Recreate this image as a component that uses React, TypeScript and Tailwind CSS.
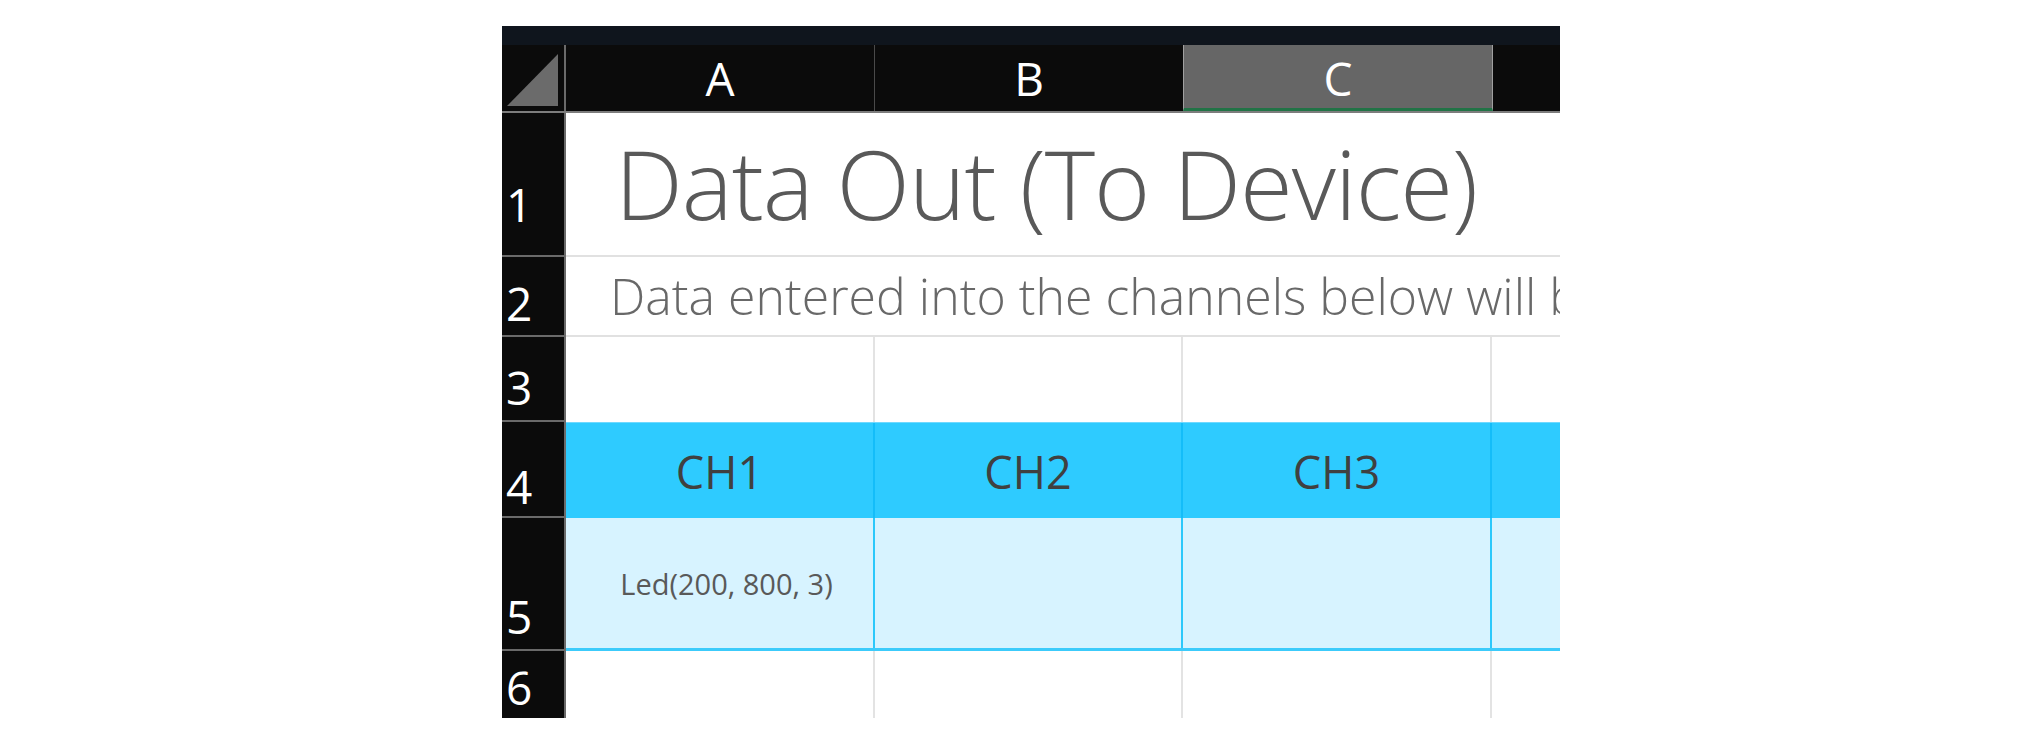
import React from "react";

const font = "font-['Open_Sans','Liberation_Sans',sans-serif]";

function RowHead({ n, pb }: { n: string; pb: string }) {
  return (
    <div
      className={`w-[64px] shrink-0 bg-[#0b0b0b] border-r-2 border-r-[#6a6a6a] border-b-2 border-b-[#6a6a6a] flex items-end pl-[4px] ${pb} text-white text-[46px] leading-none`}
    >
      {n}
    </div>
  );
}

export default function App() {
  return (
    <div className={`w-[2017px] h-[744px] bg-white pl-[502px] pt-[26px] overflow-hidden ${font}`}>
      <div className="w-[1058px] h-[692px] overflow-hidden flex flex-col">
        {/* top band */}
        <div className="h-[19px] shrink-0 bg-[#0f151d]" />

        {/* column header row */}
        <div className="h-[68px] shrink-0 flex bg-[#0b0b0b] border-b-2 border-b-[#7d7d7d]">
          <div className="w-[64px] shrink-0 border-r-2 border-r-[#6a6a6a] relative">
            <svg className="absolute left-[5px] top-[9px]" width="52" height="53" viewBox="0 0 52 53">
              <polygon points="0,52 51,0 51,52" fill="#6b6b6b" />
            </svg>
          </div>
          <div className="w-[309px] shrink-0 border-r border-r-[#4a4a4a] flex items-center justify-center text-white text-[46px] leading-none">
            A
          </div>
          <div className="w-[308px] shrink-0 flex items-center justify-center text-white text-[46px] leading-none">
            B
          </div>
          <div className="w-[310px] shrink-0 bg-[#666666] border-x border-x-[#a0a0a0] border-b-[3px] border-b-[#217346] flex items-center justify-center text-white text-[46px] leading-none pt-[2px]">
            C
          </div>
          <div className="flex-1" />
        </div>

        {/* row 1 */}
        <div className="h-[144px] shrink-0 flex">
          <RowHead n="1" pb="pb-[28px]" />
          <div className="flex-1 border-b-2 border-b-[#e1e1e1] pt-[22px] pl-[49px] whitespace-nowrap overflow-hidden text-[96px] font-light leading-none tracking-[-1px] text-[#595959]">
            Data Out (To Device)
          </div>
        </div>

        {/* row 2 */}
        <div className="h-[80px] shrink-0 flex">
          <RowHead n="2" pb="pb-[9px]" />
          <div className="flex-1 border-b-2 border-b-[#e1e1e1] pt-[14px] pl-[44px] whitespace-nowrap overflow-hidden text-[50px] font-light leading-none text-[#686868]">
            Data entered into the channels below will be sent to the device
          </div>
        </div>

        {/* row 3 */}
        <div className="h-[85px] shrink-0 flex">
          <RowHead n="3" pb="pb-[10px]" />
          <div className="flex-1 flex">
            <div className="w-[309px] shrink-0 border-r-2 border-r-[#e3e3e3]" />
            <div className="w-[308px] shrink-0 border-r-2 border-r-[#e3e3e3]" />
            <div className="w-[309px] shrink-0 border-r-2 border-r-[#e3e3e3]" />
            <div className="flex-1" />
          </div>
        </div>

        {/* row 4 */}
        <div className="h-[96px] shrink-0 flex">
          <RowHead n="4" pb="pb-[7px]" />
          <div className="flex-1 flex bg-[#2ecbff] border-t border-t-[#6fd9ff] text-[45px] leading-none text-[#404040]">
            <div className="w-[309px] shrink-0 border-r-2 border-r-[#14bdf9] flex items-center justify-center pt-[2px]">CH1</div>
            <div className="w-[308px] shrink-0 border-r-2 border-r-[#14bdf9] flex items-center justify-center pt-[2px]">CH2</div>
            <div className="w-[309px] shrink-0 border-r-2 border-r-[#14bdf9] flex items-center justify-center pt-[2px]">CH3</div>
            <div className="flex-1" />
          </div>
        </div>

        {/* row 5 */}
        <div className="h-[133px] shrink-0 flex">
          <RowHead n="5" pb="pb-[10px]" />
          <div className="flex-1 flex bg-[#d7f3ff] border-b-[3px] border-b-[#3ccbfb]">
            <div className="w-[309px] shrink-0 border-r-2 border-r-[#2cc8fb] flex items-center justify-center text-[29px] leading-none text-[#595959] pl-[14px]">
              Led(200, 800, 3)
            </div>
            <div className="w-[308px] shrink-0 border-r-2 border-r-[#2cc8fb]" />
            <div className="w-[309px] shrink-0 border-r-2 border-r-[#2cc8fb]" />
            <div className="flex-1" />
          </div>
        </div>

        {/* row 6 */}
        <div className="h-[67px] shrink-0 flex">
          <div className="w-[64px] shrink-0 bg-[#0b0b0b] border-r-2 border-r-[#6a6a6a] flex items-end pl-[4px] pb-[8px] text-white text-[46px] leading-none">
            6
          </div>
          <div className="flex-1 flex">
            <div className="w-[309px] shrink-0 border-r-2 border-r-[#e3e3e3]" />
            <div className="w-[308px] shrink-0 border-r-2 border-r-[#e3e3e3]" />
            <div className="w-[309px] shrink-0 border-r-2 border-r-[#e3e3e3]" />
            <div className="flex-1" />
          </div>
        </div>
      </div>
    </div>
  );
}
